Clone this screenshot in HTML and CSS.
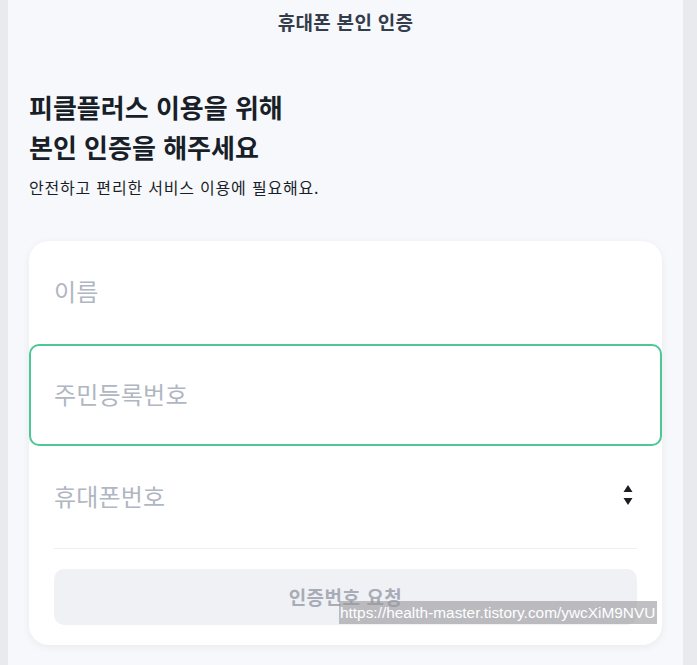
FILE: index.html
```html
<!DOCTYPE html>
<html lang="ko">
<head>
    <meta charset="UTF-8">
    <title>휴대폰 본인 인증</title>
    <link rel="stylesheet" href="styles.css">
</head>
<body>
    <div id="page">
        <div class="top">휴대폰 본인 인증</div>
        <div class="intro">
            <h1>피클플러스 이용을 위해<br>본인 인증을 해주세요</h1>
            <p>안전하고 편리한 서비스 이용에 필요해요.</p>
        </div>
        <div class="card">
            <div class="field">
                <span class="ph">이름</span>
            </div>
            <div class="field focus">
                <span class="ph">주민등록번호</span>
            </div>
            <div class="field phone">
                <span class="ph">휴대폰번호</span>
                <svg class="spin" width="10" height="22" viewBox="0 0 10 22">
                    <path d="M5 1 L9.5 8 L0.5 8 Z" fill="#1b1d22"/>
                    <path d="M0.5 14 L9.5 14 L5 21 Z" fill="#1b1d22"/>
                </svg>
            </div>
            <div class="line"></div>
            <div class="btn-wrap">
                <div class="btn">인증번호 요청</div>
            </div>
        </div>
    </div>
    <div class="mark">https://health-master.tistory.com/ywcXiM9NVU</div>
</body>
</html>
```

FILE: styles.css
```css
*{ margin: 0; padding: 0; box-sizing: border-box;}
html, body{ height: 100%;}
body{
    position: relative;
    background: #e9eaee;
    font-family: "Noto Sans CJK KR", "Noto Sans", sans-serif;
    color: #191f28;
}
#page{
    width: 675px;
    min-height: 665px;
    margin: 0 14px 0 8px;
    background: #f7f8fc;
}
#page .top{
    height: 44px;
    line-height: 44px;
    text-align: center;
    font-size: 19px;
    font-weight: 700;
    letter-spacing: 0.3px;
    color: #333d4b;
}
#page .intro{
    padding: 43px 21px 0;
}
#page .intro h1{
    font-size: 26px;
    line-height: 40px;
    font-weight: 700;
    color: #191f28;
}
#page .intro p{
    margin-top: 8px;
    font-size: 16px;
    line-height: 24px;
    letter-spacing: 0.8px;
    color: #191f28;
}
#page .card{
    margin: 42px 21px 0;
    padding-bottom: 20px;
    background: #fff;
    border-radius: 20px;
    box-shadow: 0 2px 8px rgba(0, 0, 0, 0.06);
}
#page .field{
    display: flex;
    align-items: center;
    justify-content: space-between;
    height: 102px;
    padding: 0 23px 4px;
    border: 2px solid transparent;
    border-radius: 10px;
}
#page .field:first-child{
    height: 103px;
}
#page .field.focus{
    border-color: #4cc795;
}
#page .field .ph{
    font-size: 24px;
    color: #b0b6c2;
    letter-spacing: 0.2px;
}
#page .field .spin{
    display: block;
    margin-right: 4px;
}
#page .line{
    height: 1px;
    margin: 0 25px;
    background: #eef0f3;
}
#page .btn-wrap{
    padding: 20px 25px 0;
}
#page .btn{
    height: 56px;
    line-height: 56px;
    text-align: center;
    border-radius: 10px;
    background: #f0f1f5;
    font-size: 19px;
    font-weight: 700;
    letter-spacing: 0.5px;
    color: #a7acb7;
}
.mark{
    position: absolute;
    left: 339px;
    top: 601px;
    width: 318px;
    height: 23px;
    line-height: 23px;
    padding-left: 1px;
    background: rgba(150, 150, 155, 0.6);
    font-family: "Liberation Sans", Arial, sans-serif;
    font-size: 15.4px;
    color: #fff;
    white-space: nowrap;
    overflow: hidden;
}
```
